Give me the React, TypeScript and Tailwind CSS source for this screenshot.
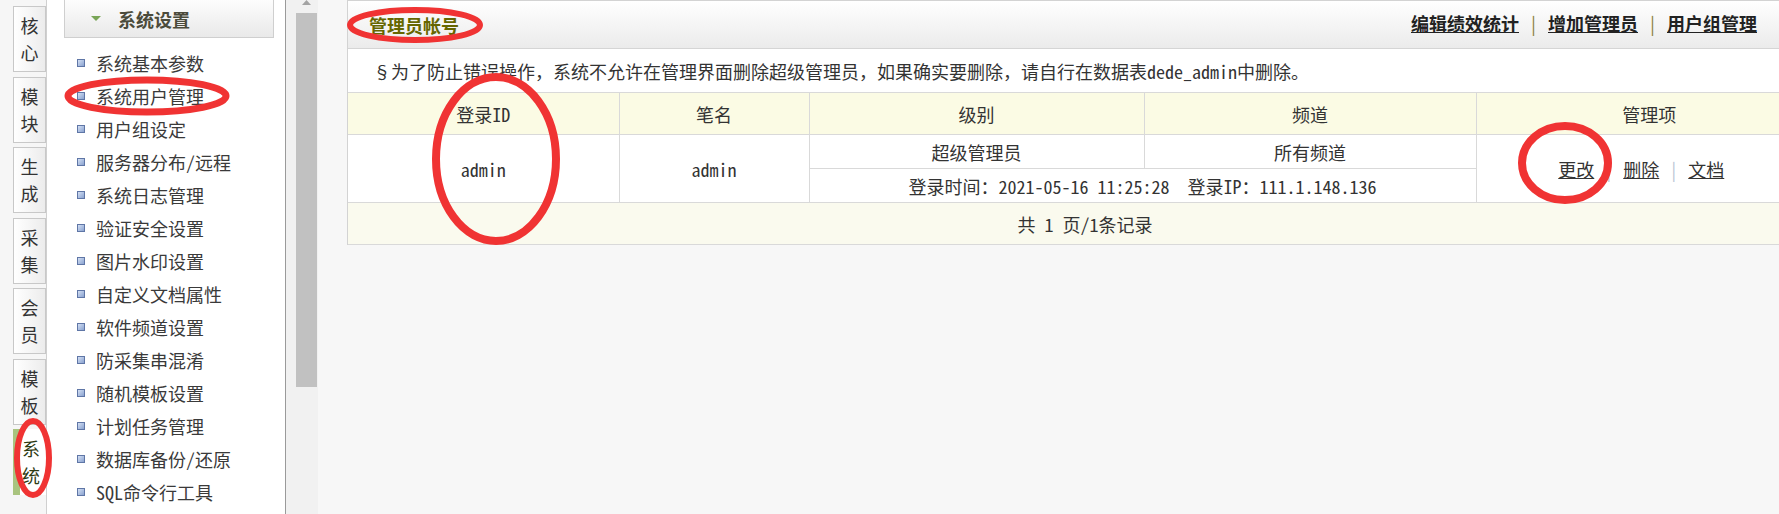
const font = "font-['Noto_Sans_Mono_CJK_SC','Noto_Sans_CJK_SC',sans-serif]";

const tabs = [
  ["核", "心"],
  ["模", "块"],
  ["生", "成"],
  ["采", "集"],
  ["会", "员"],
  ["模", "板"],
];

const menuItems = [
  "系统基本参数",
  "系统用户管理",
  "用户组设定",
  "服务器分布/远程",
  "系统日志管理",
  "验证安全设置",
  "图片水印设置",
  "自定义文档属性",
  "软件频道设置",
  "防采集串混淆",
  "随机模板设置",
  "计划任务管理",
  "数据库备份/还原",
  "SQL命令行工具",
];

const cell = "border border-[#d9d9d9] text-center align-middle";

export default function App() {
  return (
    <div className={`relative flex w-[1779px] h-[514px] overflow-hidden text-[18px] text-[#333] ${font}`}>
      {/* Left tabs */}
      <div className="w-[47px] shrink-0 border-r border-[#d0d0d0] bg-[#f6f6f6] pl-[13px] pt-[6px] flex flex-col gap-[4.5px]">
        {tabs.map(([a, b], i) => (
          <div
            key={i}
            className="w-[33px] h-[66px] border border-[#c8c8c8] bg-gradient-to-r from-white to-[#ececec] flex flex-col items-center justify-center leading-[27px] text-[#333]"
          >
            <span>{a}</span>
            <span>{b}</span>
          </div>
        ))}
        <div className="w-[33px] h-[66px] border-l-[7px] border-[#a9c47f] bg-white flex flex-col items-center justify-center leading-[27px] text-[#2e3a12] pr-[4px]">
          <span>系</span>
          <span>统</span>
        </div>
      </div>

      {/* Menu */}
      <div className="w-[239px] shrink-0 border-r border-[#9a9a9a] bg-white">
        <div className="ml-[17px] w-[210px] h-[38px] border-x border-b border-[#cfcfcf] bg-gradient-to-b from-[#fdfdfd] to-[#e9e9e9] flex items-center">
          <svg width="12" height="8" viewBox="0 0 12 8" className="ml-[25px]">
            <polygon points="1,1 11,1 6,6" fill="#79a557" />
          </svg>
          <span className="ml-[16px] font-bold text-[#4b4b3b] leading-none">系统设置</span>
        </div>
        <div className="mt-[8px]">
          {menuItems.map((t) => (
            <div key={t} className="h-[33px] flex items-center pl-[30px]">
              <span className="w-[8px] h-[8px] border border-[#5f76a6] bg-gradient-to-br from-[#d4e0f4] to-[#8aa2cf]" />
              <span className="ml-[11px] text-[#3a3a3a] leading-none">{t}</span>
            </div>
          ))}
        </div>
      </div>

      {/* Scrollbar */}
      <div className="w-[32px] shrink-0 bg-[#f1f1f1] pl-[10px]">
        <svg width="21" height="5" viewBox="0 0 21 5" className="block">
          <polygon points="6,5 15,5 10.5,0" fill="#a3a3a3" />
        </svg>
        <div className="mt-[8px] w-[21px] h-[374px] bg-[#c1c1c1]" />
      </div>

      {/* Main */}
      <div className="flex-1 bg-[#f7f7f7] pl-[29px] overflow-hidden">
        <div className="w-[1476px] shrink-0 border-l border-t border-[#d3d3d3] bg-white">
          <div className="h-[48px] border-b border-[#d5d5d5] bg-gradient-to-b from-white to-[#ebebeb] flex items-center justify-between pl-[21px] pr-[66px]">
            <span className="font-bold text-[#666600] leading-none">管理员帐号</span>
            <div className="flex items-center leading-none pb-[4px]">
              <span className="font-bold underline text-[#222]">编辑绩效统计</span>
              <span className="mx-[10px] text-[#8b7d3a]">|</span>
              <span className="font-bold underline text-[#222]">增加管理员</span>
              <span className="mx-[10px] text-[#8b7d3a]">|</span>
              <span className="font-bold underline text-[#222]">用户组管理</span>
            </div>
          </div>
          <div className="h-[43px] flex items-center pl-[25px] leading-none">
            §为了防止错误操作，系统不允许在管理界面删除超级管理员，如果确实要删除，请自行在数据表dede_admin中删除。
          </div>
          <table className="w-full table-fixed border-collapse leading-none">
            <colgroup>
              <col className="w-[271px]" />
              <col className="w-[190px]" />
              <col className="w-[335px]" />
              <col className="w-[332px]" />
              <col />
            </colgroup>
            <tbody>
              <tr className="h-[42px] bg-[#fbfbe4]">
                <td className={`${cell} border-l-0`}>登录ID</td>
                <td className={cell}>笔名</td>
                <td className={cell}>级别</td>
                <td className={cell}>频道</td>
                <td className={cell}>管理项</td>
              </tr>
              <tr className="h-[34px]">
                <td rowSpan={2} className={`${cell} border-l-0`}>admin</td>
                <td rowSpan={2} className={cell}>admin</td>
                <td className={cell}>超级管理员</td>
                <td className={cell}>所有频道</td>
                <td rowSpan={2} className={`${cell} pr-[16px]`}>
                  <span className="underline">更改</span>
                  <span className="mx-[10px] text-[#b8c4d4]">|</span>
                  <span className="underline">删除</span>
                  <span className="mx-[10px] text-[#b8c4d4]">|</span>
                  <span className="underline">文档</span>
                </td>
              </tr>
              <tr className="h-[34px]">
                <td colSpan={2} className={cell}>
                  登录时间：2021-05-16 11:25:28&nbsp;&nbsp;登录IP：111.1.148.136
                </td>
              </tr>
              <tr className="h-[42px] bg-[#fafaee]">
                <td colSpan={5} className={`${cell} border-l-0`}>
                  共 1 页/1条记录
                </td>
              </tr>
            </tbody>
          </table>
        </div>
      </div>

      {/* Red annotation marks */}
      <svg className="absolute inset-0 pointer-events-none" width="1779" height="514">
        <g fill="none" stroke="#f03333">
          <ellipse cx="147" cy="96" rx="79" ry="16" strokeWidth="7" />
          <ellipse cx="33" cy="458" rx="16" ry="37" strokeWidth="6" />
          <ellipse cx="415" cy="25" rx="65" ry="15" strokeWidth="6" />
          <ellipse cx="496" cy="159" rx="60" ry="82" strokeWidth="8" />
          <ellipse cx="1565" cy="163" rx="43" ry="37" strokeWidth="8" />
        </g>
      </svg>
    </div>
  );
}
